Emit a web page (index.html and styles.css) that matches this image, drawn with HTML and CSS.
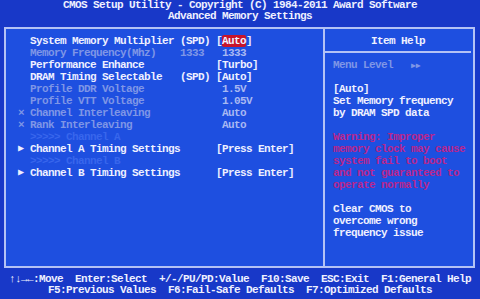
FILE: index.html
```html
<!DOCTYPE html>
<html lang="en">
<head>
  <meta charset="UTF-8" />
  <title>Advanced Memory Settings</title>
  <link rel="stylesheet" href="styles.css">
</head>
<body>
  <div class="screen">
    <header class="title">
      <div>CMOS Setup Utility - Copyright (C) 1984-2011 Award Software</div>
      <div>Advanced Memory Settings</div>
    </header>

    <main class="frame">
      <section class="settings">
        <div class="row"><span class="mark"></span><span class="label">System Memory Multiplier</span><span class="mid">(SPD)</span><span class="value">[<span class="sel">Auto</span>]</span></div>
        <div class="row dim"><span class="mark"></span><span class="label">Memory Frequency(Mhz)</span><span class="mid">1333</span><span class="value"> 1333</span></div>
        <div class="row"><span class="mark"></span><span class="label">Performance Enhance</span><span class="mid"></span><span class="value">[Turbo]</span></div>
        <div class="row"><span class="mark"></span><span class="label">DRAM Timing Selectable</span><span class="mid">(SPD)</span><span class="value">[Auto]</span></div>
        <div class="row dim"><span class="mark"></span><span class="label">Profile DDR Voltage</span><span class="mid"></span><span class="value"> 1.5V</span></div>
        <div class="row dim"><span class="mark"></span><span class="label">Profile VTT Voltage</span><span class="mid"></span><span class="value"> 1.05V</span></div>
        <div class="row dim"><span class="mark">×</span><span class="label">Channel Interleaving</span><span class="mid"></span><span class="value"> Auto</span></div>
        <div class="row dim"><span class="mark">×</span><span class="label">Rank Interleaving</span><span class="mid"></span><span class="value"> Auto</span></div>
        <div class="row faint"><span class="mark"></span><span class="label">&gt;&gt;&gt;&gt;&gt; Channel A</span></div>
        <div class="row"><span class="mark arrow">▶</span><span class="label">Channel A Timing Settings</span><span class="mid"></span><span class="value">[Press Enter]</span></div>
        <div class="row faint"><span class="mark"></span><span class="label">&gt;&gt;&gt;&gt;&gt; Channel B</span></div>
        <div class="row"><span class="mark arrow">▶</span><span class="label">Channel B Timing Settings</span><span class="mid"></span><span class="value">[Press Enter]</span></div>
      </section>

      <aside class="help">
        <div class="help-title">Item Help</div>
        <div class="help-rule"></div>
        <div class="help-body">
          <div class="line dim">Menu Level   <span class="arrow">▶▶</span></div>
          <div class="line"></div>
          <div class="line">[Auto]</div>
          <div class="line">Set Memory frequency</div>
          <div class="line">by DRAM SPD data</div>
          <div class="line"></div>
          <div class="line warn">Warning: Improper</div>
          <div class="line warn">memory clock may cause</div>
          <div class="line warn">system fail to boot</div>
          <div class="line warn">and not guaranteed to</div>
          <div class="line warn">operate normally</div>
          <div class="line"></div>
          <div class="line">Clear CMOS to</div>
          <div class="line">overcome wrong</div>
          <div class="line">frequency issue</div>
        </div>
      </aside>
    </main>

    <footer class="keys">
      <div>↑↓→←:Move  Enter:Select  +/-/PU/PD:Value  F10:Save  ESC:Exit  F1:General Help</div>
      <div>F5:Previous Values  F6:Fail-Safe Defaults  F7:Optimized Defaults</div>
    </footer>
  </div>
</body>
</html>
```

FILE: styles.css
```css
html, body {
  margin: 0;
  padding: 0;
  background-color: #1838c8;
}
.screen {
  width: 480px;
  height: 299px;
  overflow: hidden;
  background-color: #1838c8;
  color: #eef0ff;
  font-family: "Liberation Mono", "DejaVu Sans Mono", monospace;
  font-size: 11px;
  font-weight: bold;
  letter-spacing: -0.6px;
}
.title div,
.keys div,
.row span,
.line {
  white-space: pre;
}

/* Title band */
.title {
  height: 27px;
  text-align: center;
  line-height: 11px;
}

/* Main double panel */
.frame {
  display: grid;
  grid-template-columns: 319px 146px;
  height: 237px;
  margin: 0 5px 0 4px;
  border: 2px solid #b4c2f5;
  background-color: #1e4fe0;
}
.settings {
  padding: 6px 0 0 12px;
  border-right: 2px solid #b4c2f5;
}
.row {
  display: flex;
  height: 12px;
  line-height: 12px;
}
.row .mark {
  width: 12px;
}
.row .label {
  width: 150px;
}
.row .mid {
  width: 36px;
}
.arrow {
  font-size: 8px;
  letter-spacing: 0;
}
.row .arrow {
  font-size: 10px;
}
.row.dim .label,
.row.dim .mark,
.row.dim .mid {
  color: #7f96e6;
}
.row.dim .value {
  color: #a8b8f2;
}
.row.faint {
  color: #3866ec;
}
.sel {
  background-color: #c8142a;
  border-radius: 2px;
}

/* Help panel */
.help {
  padding-top: 6px;
}
.help-title {
  text-align: center;
  line-height: 12px;
}
.help-rule {
  height: 12px;
  position: relative;
}
.help-rule::after {
  content: "";
  position: absolute;
  left: 0;
  right: 0;
  top: 4px;
  height: 2px;
  background-color: #b4c2f5;
}
.help-body {
  padding-left: 8px;
}
.line {
  height: 12px;
  line-height: 12px;
}
.line.dim {
  color: #7f96e6;
}
.line.warn {
  color: #b8268e;
}

/* Key legend */
.keys {
  padding-top: 6px;
  text-align: center;
  line-height: 11px;
}
```
